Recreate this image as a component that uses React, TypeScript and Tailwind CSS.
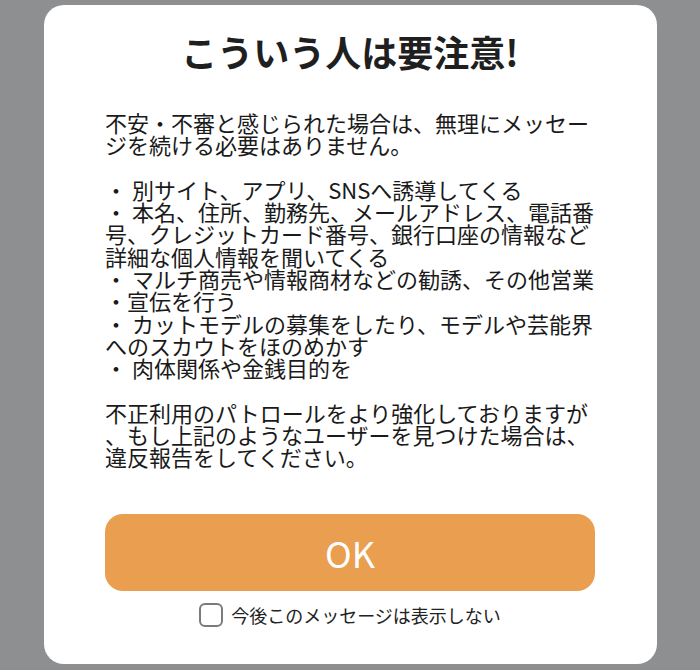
const bodyLines = [
  "不安・不審と感じられた場合は、無理にメッセー",
  "ジを続ける必要はありません。",
  "",
  "・ 別サイト、アプリ、SNSへ誘導してくる",
  "・ 本名、住所、勤務先、メールアドレス、電話番",
  "号、クレジットカード番号、銀行口座の情報など",
  "詳細な個人情報を聞いてくる",
  "・ マルチ商売や情報商材などの勧誘、その他営業",
  "・宣伝を行う",
  "・ カットモデルの募集をしたり、モデルや芸能界",
  "へのスカウトをほのめかす",
  "・ 肉体関係や金銭目的を",
  "",
  "不正利用のパトロールをより強化しておりますが",
  "、もし上記のようなユーザーを見つけた場合は、",
  "違反報告をしてください。",
];

export default function App() {
  return (
    <div className="flex h-[670px] w-[700px] justify-center bg-[#8e8f90] pt-[5px] font-['Noto_Sans_CJK_JP',sans-serif]">
      <div className="flex h-[659px] w-[613px] flex-col items-center rounded-[20px] bg-white pt-[24px]">
        <h1 className="h-[44px] text-[36px] font-bold leading-[44px] text-[#1f1f1f]">
          こういう人は要注意!
        </h1>

        <div className="mt-[38px] w-[490px] text-[22px] leading-[22.3px] text-[#1a1a1a]">
          {bodyLines.map((line, i) => (
            <div key={i} className="h-[22.3px] whitespace-nowrap">
              {line}
            </div>
          ))}
        </div>

        <button
          type="button"
          className="mt-[46px] h-[77px] w-[490px] rounded-[18px] bg-[#e99e50] text-[36px] leading-none text-white"
        >
          OK
        </button>

        <label className="mt-[12px] flex items-center gap-[8px] text-[18px] leading-[24px] text-[#222]">
          <span className="h-[24px] w-[24px] rounded-[6px] border-2 border-[#7b7b7b]" />
          今後このメッセージは表示しない
        </label>
      </div>
    </div>
  );
}
